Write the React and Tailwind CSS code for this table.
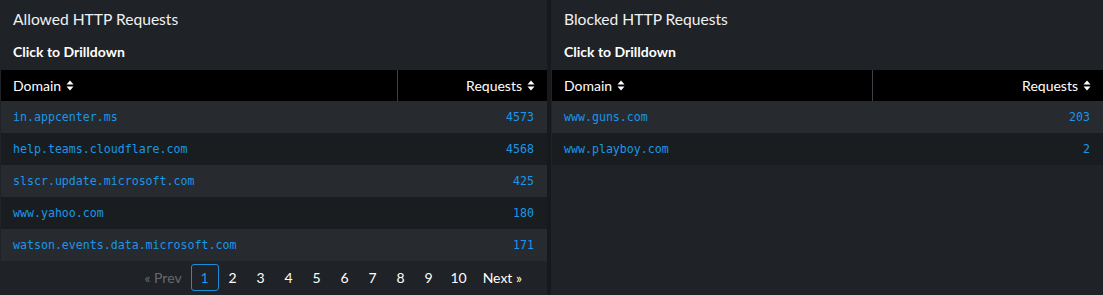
const allowed = [
  ['in.appcenter.ms', 4573],
  ['help.teams.cloudflare.com', 4568],
  ['slscr.update.microsoft.com', 425],
  ['www.yahoo.com', 180],
  ['watson.events.data.microsoft.com', 171],
]

const blocked = [
  ['www.guns.com', 203],
  ['www.playboy.com', 2],
]

const sans = { fontFamily: 'Lato, "Open Sans", sans-serif' }

function SortIcon() {
  return (
    <svg width="8" height="11" viewBox="0 0 8 11" className="ml-[5px] inline-block">
      <path d="M4 0.5 L7.5 4.5 L0.5 4.5 Z" fill="currentColor" />
      <path d="M4 10.5 L7.5 6.5 L0.5 6.5 Z" fill="currentColor" />
    </svg>
  )
}

function Panel({ title, rows, pager, wide, className = '' }) {
  return (
    <section className={`flex h-[295px] flex-col bg-[#1f2226] ${className}`} style={sans}>
      <h2 className="h-[38px] pl-[13px] pt-[9px] text-[15.6px] leading-5 text-[#f0f1f2]">{title}</h2>
      <p className="h-[32px] pl-[13px] pt-[4px] text-[14px] font-bold leading-5 text-white">
        Click to Drilldown
      </p>
      <table className="ml-px w-[calc(100%-1px)] border-collapse">
        <thead>
          <tr className="h-[31px] bg-black text-[14px] text-white">
            <th className="pl-3 text-left font-normal">
              <span className="inline-flex items-center">Domain<SortIcon /></span>
            </th>
            <th
              className={`${wide ? 'w-[231px]' : 'w-[150px]'} border-l border-[#3c4046] pr-[12px] text-right font-normal`}
            >
              <span className="inline-flex items-center">Requests<SortIcon /></span>
            </th>
          </tr>
        </thead>
        <tbody className="font-['DejaVu_Sans_Mono',monospace] text-[11.6px] text-[#1a97e8]">
          {rows.map(([domain, count], i) => (
            <tr key={domain} className={`h-[32px] ${i % 2 === 0 ? 'bg-[#272a2e]' : 'bg-[#1a1d20]'}`}>
              <td className="pl-3 pt-[2px]">{domain}</td>
              <td className="pr-[13px] pt-[2px] text-right">{count}</td>
            </tr>
          ))}
        </tbody>
      </table>
      {pager && (
        <nav className="flex items-center justify-end pr-[25px] pt-[3px] text-[14px] leading-4 text-white">
          <span className="mr-[9px] text-[#646a72]">« Prev</span>
          <span className="flex h-[27px] w-[28px] items-center justify-center rounded-[3px] border border-[#1a8cd8] text-[#1a97e8]">
            1
          </span>
          {[2, 3, 4, 5, 6, 7, 8, 9].map((n) => (
            <span key={n} className="w-[28px] text-center">{n}</span>
          ))}
          <span className="ml-[2px] w-[28px] text-center">10</span>
          <span className="ml-[10px]">Next »</span>
        </nav>
      )}
    </section>
  )
}

export default function App() {
  return (
    <div className="flex h-[295px] w-[1103px] gap-[4px] overflow-hidden bg-[#17191c]">
      <Panel title="Allowed HTTP Requests" rows={allowed} pager className="w-[547px] shrink-0" />
      <Panel title="Blocked HTTP Requests" rows={blocked} wide className="flex-1" />
    </div>
  )
}
